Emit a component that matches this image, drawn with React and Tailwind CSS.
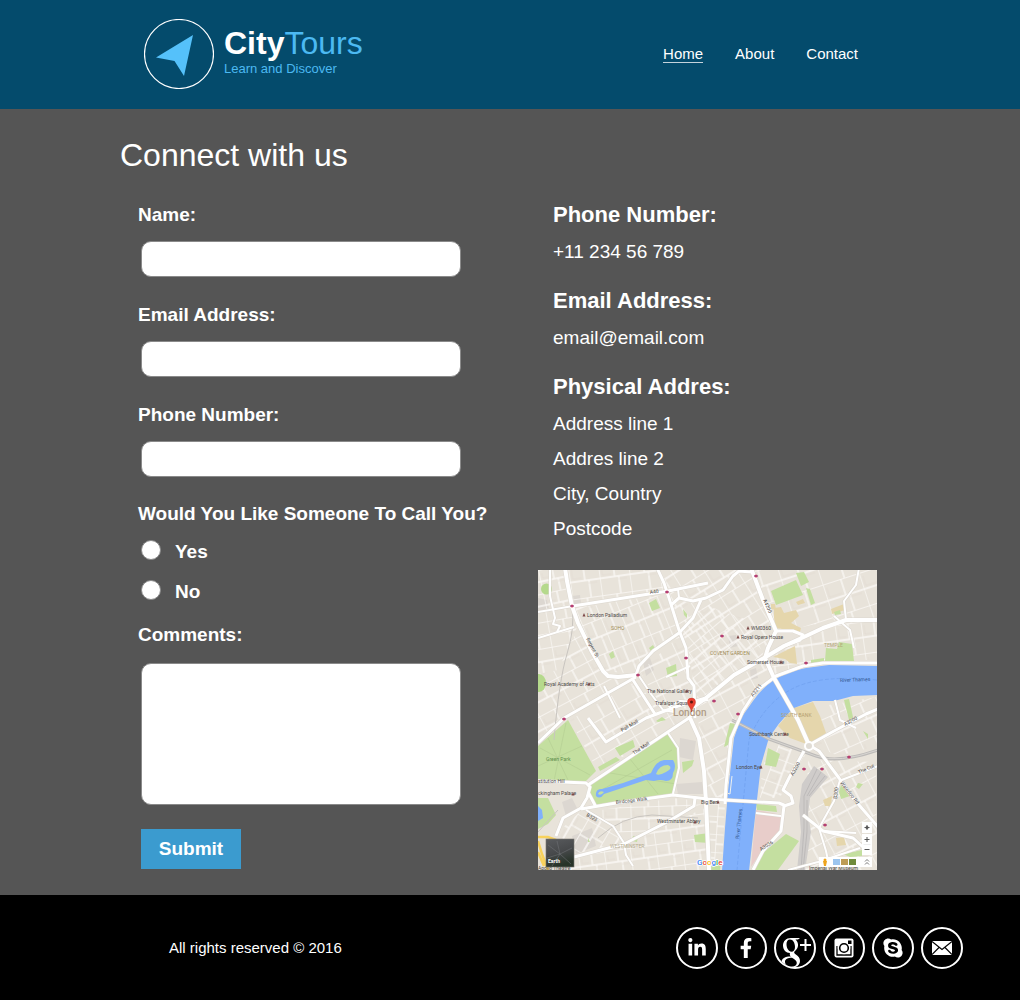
import React from "react";
import { FaFacebookF, FaLinkedinIn, FaSkype } from "react-icons/fa";

const LABEL = "text-[19px] leading-6 font-bold";
const BOX =
  "ml-[3px] block w-full max-w-[320px] rounded-[10px] border border-[#8a8a8a] bg-white px-3 text-base text-black";

function Logo() {
  return (
    <a href="#home" className="flex items-center gap-2.5">
      <svg viewBox="0 0 70 70" className="size-[70px]" aria-hidden="true">
        <circle cx="35" cy="35" r="34.5" fill="none" stroke="#fff" strokeWidth="1.2" />
        <path d="M49 16 L12 38.5 L30.5 42 L40 57 Z" fill="#55c1fa" />
      </svg>
      <span className="flex flex-col gap-0.5 pb-1">
        <span className="text-[32px] leading-8 text-[#4cb9f2]">
          <b className="text-white">City</b>Tours
        </span>
        <span className="text-[13px] leading-4 text-[#4cb9f2]">Learn and Discover</span>
      </span>
    </a>
  );
}

function Field({ id, label, type }) {
  return (
    <div>
      <label htmlFor={id} className={`${LABEL} block`}>{label}</label>
      <input id={id} type={type} className={`${BOX} mt-3.5 h-9`} />
    </div>
  );
}

function Choice({ id, label }) {
  return (
    <div className="ml-[3px] flex h-10 items-center gap-3.5">
      <input
        id={id}
        name="call"
        type="radio"
        className="size-5 appearance-none rounded-full border border-[#8a8a8a] bg-white checked:border-[6px] checked:border-[#3b9bcf]"
      />
      <label htmlFor={id} className={`${LABEL} pt-1`}>{label}</label>
    </div>
  );
}

/* Fine street grids: outline of the district, street angle, block width and height. */
const DISTRICTS = [
  ["0,0 30,0 34,36 0,42", 78, 14, 12],
  ["0,42 34,37 40,55 20,100 0,104", 80, 16, 13],
  ["29,0 119,0 130,21 35,35", 82, 15, 17],
  ["36,38 130,24 141,62 100,96 97,104 66,101 42,54", 68, 10, 17],
  ["0,104 20,100 40,58 64,104 95,109 26,147 0,170", 62, 17, 13],
  ["102,102 141,66 148,80 150,110 156,118 155,138 126,140", 65, 15, 15],
  ["119,0 212,0 236,60 228,84 168,126 157,120 150,80", 58, 14, 15],
  ["97,112 125,140 150,148 96,182 58,198 32,150", 60, 20, 16],
  ["143,64 164,34 210,50 226,86 160,130", 50, 12, 13],
  ["216,0 339,0 339,48 308,48 240,62", 72, 19, 17],
  ["232,88 266,68 308,52 339,52 339,90 285,90 236,104", 82, 13, 16],
  ["158,132 228,90 234,108 214,122 196,152 190,228 169,228", 62, 17, 15],
  ["40,244 135,228 168,232 131,249 86,272 75,255", 88, 14, 12],
  ["20,262 43,241 74,257 86,273 36,284", 30, 16, 12],
  ["38,288 86,276 131,254 167,238 171,300 30,300", 82, 13, 12],
  ["171,234 187,234 184,300 172,300", 4, 9, 14],
  ["260,140 339,127 339,176 300,186 274,174", 66, 16, 18],
  ["224,200 233,170 268,184 250,210 242,228 222,228", 20, 12, 13],
  ["270,190 338,192 339,300 265,300", 62, 16, 17],
];

const PARKS = [
  "233,21 258,10 265,25 238,35",
  "258,3 266,2 271,12 263,16",
  "268,18 272,19 277,33 273,35",
  "287,91 288,78 299,79 301,72 314,74 316,91",
  "273,90 286,88 286,92 273,93",
  "111,33 118,29 122,38 114,41",
  "71,84 75,81 77,87 73,89",
  "111,78 115,75 117,79 113,81",
  "128,98 138,94 139,106 130,107",
  "145,39 149,44 149,48 146,45",
  "296,42 302,40 303,44 297,45",
  "30,150 58,201 48,211 0,211 0,176",
  "130,163 140,180 141,200 136,224 57,236 50,220 54,213 95,187",
  "0,228 10,228 18,245 10,254 0,259",
  "60,197 78,187 82,190 62,201",
  "77,178 95,170 97,177 82,186",
  "118,151 124,147 128,150 120,152",
  "144,192 156,190 154,196 145,203",
  "156,265 171,263 171,273 157,272",
  "95,266 100,267 99,272 94,271",
  "50,268 52,272 50,272",
  "192,153 197,154 190,175 186,177",
  "230,178 242,184 238,197 227,195",
  "218,234 238,236 239,242 219,240",
  "248,264 261,271 240,300 217,300 226,282",
  "303,215 312,226 303,229 301,222",
  "320,213 325,214 321,219 318,217",
  "306,130 311,129 315,147 311,150",
  "325,161 330,164 330,169",
  "171,292 183,290 182,300 171,300",
  "305,284 324,280 324,286 312,287",
];

const SANDS = [
  "236,38 243,37 246,43 258,40 261,46 253,53 263,58 262,62 238,58 236,48",
  "235,87 257,76 259,94 252,93 247,89",
  "293,39 306,34 307,40 294,44",
  "258,32 265,29 267,33 260,35",
  "246,149 256,138 275,132 282,146 288,163 271,175 252,168 240,156",
  "285,230 294,226 293,236 287,236",
  "298,268 306,267 308,275 299,276",
  "233,34 237,34 238,40 233,39",
];

const GRAYS = [
  "34,26 42,25 43,33 35,35",
  "105,92 112,88 116,100 108,106",
  "142,168 158,171 155,190 141,187",
  "212,100 218,98 220,108 213,110",
  "190,66 198,65 200,76 192,78",
  "34,266 54,258 58,276 38,284",
  "24,232 34,228 40,240 28,246",
  "138,214 164,212 166,224 140,224",
  "0,28 9,30 11,38 0,42",
];

const ROADS = [
  [4, "27,-2 29,11 34,36 40,53 53,80 65,101 70,106 80,107 98,105"],
  [3, "35,36 130,21 170,13"],
  [2, "0,42 35,36"],
  [2, "0,68 36,57"],
  [3, "119,-2 126,13 131,28 141,60 148,78 150,108 156,116 157,148"],
  [3, "98,105 101,96 115,81 141,63 155,48 163,30"],
  [3, "133,35 141,28 155,31 168,28 185,20 195,6 201,1 213,2"],
  [2, "131,21 140,19 141,28"],
  [3, "0,173 26,148 98,107"],
  [3, "95,110 115,141 117,144"],
  [2, "101,106 113,124 125,140 136,142"],
  [3, "50,148 68,172 108,148 140,136 168,128"],
  [2, "136,142 131,136 142,131 157,132 170,130"],
  [4, "213,-2 225,30 238,61 230,78 227,88 236,108 260,150 271,175"],
  [4, "157,136 168,128 196,105 226,88 246,76 268,66 285,58 308,50 340,50"],
  [3, "238,61 255,61 265,65 262,70 246,76"],
  [2, "321,-2 318,15 306,31 308,50"],
  [3, "340,93 285,93 265,96 238,106 218,121 205,141 193,168 188,215 187,234"],
  [3, "50,215 95,185 151,148 157,140"],
  [3, "0,211 48,213 52,217 49,228 43,238"],
  [3, "50,222 58,237"],
  [3, "43,239 78,233 135,225 170,229 241,233 248,236"],
  [3, "43,238 25,248 18,266"],
  [2, "48,240 75,256 86,273 88,285 95,296"],
  [3, "36,287 86,274 131,251 156,236 157,228"],
  [4, "152,148 161,168 166,201 168,232 171,300"],
  [2, "130,163 140,178 141,198 135,224"],
  [3, "271,175 296,161 328,144 340,139"],
  [3, "271,175 281,181 301,208 315,228 340,257"],
  [3, "266,181 251,208 245,220 253,226 255,233 246,236 243,261 225,281 215,300"],
  [2, "301,211 340,196"],
  [2, "302,210 296,231 281,258 288,281 292,300"],
  [3, "265,245 285,261 315,268 326,278"],
  [2, "285,261 318,263"],
  [2, "218,243 243,246"],
  [2, "250,300 280,292 322,278"],
  [2, "296,46 312,60 316,78"],
  [2, "12,0 12,26 17,48 15,54 22,56 19,62"],
  [2, "128,107 152,96"],
  [2, "66,116 82,148"],
  [2, "297,130 302,150 318,158"],
];

const LABELS = [
  [49, 47, "London Palladium"],
  [6, 116, "Royal Academy of Arts"],
  [109, 123, "The National Gallery"],
  [117, 135, "Trafalgar Square"],
  [213, 60, "WM0360"],
  [203, 69, "Royal Opera House"],
  [209, 94, "Somerset House"],
  [211, 166, "Southbank Centre"],
  [198, 199, "London Eye"],
  [0, 225, "ckingham Palace"],
  [119, 253, "Westminster Abbey"],
  [163, 234, "Big Ben"],
  [0, 213, "stitution Hill"],
];

const TILTED = [
  [48, 69, 62, "Regent St"],
  [112, 24, -8, "A40"],
  [225, 30, 66, "A4200"],
  [215, 127, -52, "A3211"],
  [84, 162, -30, "Pall Mall"],
  [96, 185, -34, "The Mall"],
  [78, 234, -7, "Birdcage Walk"],
  [48, 246, 30, "B323"],
  [255, 206, -60, "A3200"],
  [307, 156, -28, "A3200"],
  [321, 204, -24, "The Cut"],
  [302, 213, 52, "Waterloo Rd"],
  [299, 229, -84, "B300"],
  [223, 281, -32, "A3036"],
];

const STATIONS = [
  [34, 36], [129, 22], [148, 88], [100, 105], [26, 149], [218, 6], [184, 66],
  [268, 93], [176, 131], [200, 144], [266, 199], [284, 199], [311, 187], [287, 255],
];

const DOTS = [
  [46, 45], [51, 114], [149, 121], [210, 58], [200, 67], [243, 92], [247, 164],
  [223, 197], [35, 224], [157, 252], [180, 232],
];

const THAMES =
  "M203 148 L215 131 Q224 118 236 110 Q250 101 268 98 L291 95 L340 96 V125 L315 126 L296 131 L275 131 L256 138 Q238 154 230 171 L223 195 L220 221 L215 265 L211 301 H184 L187 258 L190 221 L196 168 Z";

function MapView() {
  return (
    <svg viewBox="0 0 339 300" className="block w-full" role="img" aria-label="Map of central London" fontFamily="Roboto, 'Liberation Sans', sans-serif">
      <defs>
        {DISTRICTS.map(([, angle, w, h], i) => (
          <pattern key={i} id={`streets${i}`} width={w * 2} height={h * 2} patternUnits="userSpaceOnUse" patternTransform={`rotate(${angle - 90})`}>
            <path d={`M0 0 H${w * 2} M0 ${h} H${w * 2} M0 0 V${h * 2} M${w} 0 V${h} M${w + 4} ${h} V${h * 2}`} stroke="#fbf9f6" strokeWidth="1.3" fill="none" />
            <path d={`M3 4 V${h - 3} H${w - 3} M${w + 3} ${h + 3} H${w * 2 - 3}`} stroke="#dfd9cf" strokeWidth="0.5" fill="none" />
          </pattern>
        ))}
        <linearGradient id="earth" x1="0" y1="0" x2="0.3" y2="1">
          <stop offset="0" stopColor="#595b5e" />
          <stop offset="0.55" stopColor="#47494b" />
          <stop offset="1" stopColor="#273328" />
        </linearGradient>
      </defs>
      <rect width="339" height="300" fill="#e8e3da" />
      {GRAYS.map((p) => <polygon key={p} points={p} fill="#dcd7d1" />)}
      {DISTRICTS.map(([p], i) => <polygon key={p} points={p} fill={`url(#streets${i})`} />)}
      {SANDS.map((p) => <polygon key={p} points={p} fill="#e5d6ac" />)}
      <polygon points="218,240 245,245 243,263 224,281 213,297 216,262" fill="#e8cdca" />
      {PARKS.map((p) => <polygon key={p} points={p} fill="#c4dfa0" />)}
      <circle cx="8.500" cy="19" r="5.500" fill="#b5d98c" />
      <ellipse cx="1" cy="113" rx="7" ry="9" fill="#b5d98c" />
      <path d="M2 178 L52 205 M0 196 L44 176 M10 168 L30 210 M28 153 L16 211 M60 222 L134 180 M92 189 L120 224 M72 203 L138 214" stroke="#b3cd92" strokeWidth="0.6" fill="none" />
      <path d="M34 38 Q37 58 29 84 T16 170 M60 268 Q84 246 114 245 L160 248 M0 262 L20 240" stroke="#c9c5c0" fill="none" />

      <path d={THAMES} fill="#80b0fb" />
      <path d="M339 110 Q280 104 252 120 T211 170 L199 300" fill="none" stroke="#6f9fee" strokeWidth="0.7" strokeDasharray="4 2" />
      <path d="M58 226 Q57 219 64 219 L85 213 L113 203 Q118 191 126 190 L135 190 Q139 196 135 203 Q135 211 128 211 Q122 209 116 211 L108 210 L66 224 Q62 230 58 226Z" fill="#80b0fb" />
      <path d="M118 204 Q121 195 130 195 Q136 198 128 202 Q121 206 118 204Z M60 224 Q61 220 66 222 Q63 226 60 224Z" fill="#c4dfa0" />
      <path d="M0 236 L4 240 L5 248 L0 251Z" fill="#80b0fb" />
      <path d="M194 206 L192 224 L189 223" stroke="#eef0ee" fill="none" />

      <path d="M194 150 L231 169 L278 186 Q300 194 340 180" fill="none" stroke="#bdbbb9" strokeWidth="3" />
      <path d="M194 150 L231 169 L278 186 Q300 194 340 180" fill="none" stroke="#d8d5d1" strokeWidth="1" />
      <path d="M276 196 L290 207 L272 228 L270 244 L273 262 L267 300 H259 L263 262 L261 236 L264 214Z" fill="#cfccca" />
      <path d="M279 199 L266 226 M283 202 L269 226 M287 206 L271 226 M266 226 L266 258 L263 300 M269 230 L269 262 L265 300" stroke="#b4b2b1" strokeWidth="0.7" fill="none" />

      {ROADS.map(([w, p]) => (
        <polyline key={p} points={p} fill="none" stroke="#dcd7cf" strokeWidth={w + 1} strokeLinejoin="round" />
      ))}
      {ROADS.map(([w, p]) => (
        <polyline key={`${p}-top`} points={p} fill="none" stroke="#fff" strokeWidth={w} strokeLinejoin="round" />
      ))}
      <path d="M0 267 H10 L18 270 M0 271 L4 284 L10 300 M0 282 L6 296" stroke="#f8d25c" strokeWidth="2.500" fill="none" />
      <circle cx="271" cy="176" r="4" fill="#e0dcd5" stroke="#fff" strokeWidth="2" />

      <g fill="#4d4a48" fontSize="5">
        {LABELS.map(([x, y, t]) => <text key={`${t}${x}`} x={x} y={y}>{t}</text>)}
        {TILTED.map(([x, y, a, t]) => (
          <text key={`${t}${x}`} x={x} y={y} transform={`rotate(${a} ${x} ${y})`}>{t}</text>
        ))}
        <text x="302" y="112" fill="#32578f" transform="rotate(-2 302 112)">River Thames</text>
        <text x="201" y="269" fill="#32578f" transform="rotate(-84 201 269)">River Thames</text>
        <text x="8" y="191" fill="#5f8f4c">Green Park</text>
        <text x="271" y="300">Imperial War Museum</text>
        <text x="0" y="300">Apollo Theatre</text>
      </g>
      <g fill="#a08c55" fontSize="5">
        <text x="73" y="60">SOHO</text>
        <text x="172" y="85">COVENT GARDEN</text>
        <text x="286" y="77" fill="#b3a878">TEMPLE</text>
        <text x="243" y="147" fill="#b5a070">SOUTH BANK</text>
        <text x="72" y="278" fill="#b5ab90">WESTMINSTER</text>
      </g>
      {STATIONS.map(([x, y]) => (
        <g key={`${x}-${y}`}>
          <circle cx={x} cy={y} r="1.500" fill="#e0415c" />
          <rect x={x - 2} y={y - 0.5} width="4" height="1" fill="#8c3f83" />
        </g>
      ))}
      {DOTS.map(([x, y]) => <path key={`${x}-${y}`} d={`M${x - 1.5} ${y + 1.5} L${x} ${y - 2} L${x + 1.5} ${y + 1.5}Z`} fill="#7d4a49" />)}

      <text x="135" y="146" fontSize="10" fontWeight="500" fill="#b09c87">London</text>
      <path d="M153.500 142 C153 137 149.500 136 149.500 132 A4 4 0 0 1 157.500 132 C157.500 136 154 137 153.500 142Z" fill="#ea4031" stroke="#b93a2e" strokeWidth="0.5" />
      <circle cx="153.500" cy="132" r="1.500" fill="#5c1610" />

      <rect x="8" y="269" width="28" height="28" fill="url(#earth)" stroke="#77756f" strokeWidth="0.6" />
      <path d="M10 275 L22 284 L34 278 M14 296 L22 284 L19 271 M9 288 L22 284 L33 294" stroke="#74767a" strokeWidth="0.5" fill="none" />
      <text x="10" y="293" fontSize="5" fontWeight="700" fill="#fff">Earth</text>

      <text x="159" y="295" fontSize="8" fontWeight="500" stroke="#fff" strokeWidth="1.500" paintOrder="stroke" fill="#4285f4">
        G<tspan fill="#ea4335">o</tspan><tspan fill="#fbbc05">o</tspan><tspan>g</tspan><tspan fill="#34a853">l</tspan><tspan fill="#ea4335">e</tspan>
      </text>

      <g fill="#fff">
        <rect x="324" y="252" width="10" height="11" />
        <rect x="324" y="264" width="10" height="21" />
        <rect x="281" y="287" width="53" height="10" />
      </g>
      <circle cx="329" cy="257.500" r="1.500" fill="#555" />
      <path d="M326.500 257.500 H331.500 M329 255 V260 M326.500 269.500 H331.500 M329 267 V272 M326.500 279.500 H331.500" stroke="#555" strokeWidth="1" />
      <path d="M325.500 274.500 H332.500" stroke="#ddd" strokeWidth="0.5" />
      <path d="M285 291 H289 L288 296 H286Z" fill="#efa51f" />
      <circle cx="287" cy="290" r="1.500" fill="#efa51f" />
      <rect x="295" y="289" width="7" height="6" fill="#9cc5ee" />
      <rect x="303" y="289" width="7" height="6" fill="#bd9c55" />
      <rect x="311" y="289" width="7" height="6" fill="#6f8b3c" />
      <path d="M327 291.500 L329 289.500 L331 291.500 M327 294.500 L329 292.500 L331 294.500" stroke="#555" strokeWidth="0.8" fill="none" />
    </svg>
  );
}

function Social({ label, children }) {
  return (
    <a href={`#${label}`} aria-label={label} className="flex size-[42px] items-center justify-center overflow-hidden rounded-full border-2 border-white text-white">
      {children}
    </a>
  );
}

function GooglePlusMark() {
  return (
    <svg viewBox="0 0 38 38" className="size-[38px] shrink-0" fill="#fff" fillRule="evenodd" aria-hidden="true">
      <path d="M24 9 H15 C10 9 7 12.500 7 16.500 C7 21 10 24 14 24 C13.500 25.500 13.800 26.500 14.800 27.500 C9 27.500 5.500 29.500 5.500 33 C5.500 36.500 9.500 39 14.500 39 C20.500 39 24 36 24 32 C24 29 22.500 27.300 19.500 25.200 C17.500 23.800 17.800 22.800 19.500 21.500 C22.800 19 23 13.500 19.500 10.500 H22Z M14 10.500 C17 10.500 19 14 19 18 C19 21 17.500 22.700 15.500 22.700 C12.500 22.700 10.500 19 10.500 15 C10.500 12.300 11.800 10.500 14 10.500Z M16 28.800 C19 30.800 20.800 31.800 20.800 34 C20.800 36.300 18.500 37.600 15.500 37.600 C11.500 37.600 9 35.600 9 32.800 C9 30 12 28.800 16 28.800Z" />
      <path d="M28.500 10 H30.500 V15 H35 V17 H30.500 V22 H28.500 V17 H24 V15 H28.500Z" />
    </svg>
  );
}

function CameraMark() {
  return (
    <svg viewBox="0 0 20 20" className="size-5" aria-hidden="true">
      <rect x="0.500" y="0.500" width="19" height="19" rx="2" fill="#fff" />
      <path d="M3 8 V17 H17 V8" fill="none" stroke="#000" strokeWidth="1.300" />
      <circle cx="10" cy="10" r="6.300" fill="#fff" />
      <circle cx="10" cy="10" r="4.300" fill="#fff" stroke="#000" strokeWidth="1.600" />
      <rect x="14" y="2.500" width="3.500" height="3.500" fill="#000" />
    </svg>
  );
}

function MailMark() {
  return (
    <svg viewBox="0 0 20 14" className="h-3.5 w-5" aria-hidden="true">
      <rect width="20" height="14" fill="#fff" />
      <path d="M0 0.500 L10 8.500 L20 0.500 M0 13.500 L7 6.500 M20 13.500 L13 6.500" fill="none" stroke="#000" strokeWidth="1.200" />
    </svg>
  );
}

export default function App() {
  return (
    <div className="flex min-h-screen flex-col bg-[#555] font-['Liberation_Sans',Arial,sans-serif] text-white">
      <header className="bg-[#044b6c]">
        <div className="mx-auto flex h-[109px] max-w-7xl items-center justify-between pr-[162px] pb-0.5 pl-36">
          <Logo />
          <nav className="flex gap-8 text-[15px] leading-[17px]">
            <a href="#home" aria-current="page" className="border-b border-[#c5d3dc]">Home</a>
            <a href="#about">About</a>
            <a href="#contact">Contact</a>
          </nav>
        </div>
      </header>

      <main className="mx-auto w-full max-w-7xl grow pt-[26px] pr-[143px] pb-[25px] pl-[120px]">
        <h1 className="text-[32px] leading-10">Connect with us</h1>
        <div className="mt-[26px] grid grid-cols-[418fr_339fr]">
          <form className="pt-0.5 pl-[18px]" onSubmit={(e) => e.preventDefault()}>
            <div className="flex flex-col gap-[26px]">
              <Field id="name" label="Name:" type="text" />
              <Field id="email" label="Email Address:" type="email" />
              <Field id="phone" label="Phone Number:" type="tel" />
            </div>
            <fieldset className="mt-[25px]">
              <legend className={`${LABEL} mb-1`}>Would You Like Someone To Call You?</legend>
              <Choice id="yes" label="Yes" />
              <Choice id="no" label="No" />
            </fieldset>
            <label htmlFor="comments" className={`${LABEL} mt-[13px] block`}>Comments:</label>
            <textarea id="comments" className={`${BOX} mt-4 h-[142px] resize-none py-2`} />
            <button type="submit" className={`${LABEL} mt-6 ml-[3px] block h-10 w-[100px] bg-[#3b9bcf]`}>Submit</button>
          </form>

          <section>
            <div className="flex flex-col gap-[18px] pl-[15px] text-[19px] leading-[35px]">
              <div>
                <h2 className="mb-[5px] text-[22px] leading-7 font-bold">Phone Number:</h2>
                <p>+11 234 56 789</p>
              </div>
              <div>
                <h2 className="mb-[5px] text-[22px] leading-7 font-bold">Email Address:</h2>
                <p>email@email.com</p>
              </div>
              <div>
                <h2 className="mb-[5px] text-[22px] leading-7 font-bold">Physical Addres:</h2>
                <address className="not-italic">
                  <p>Address line 1</p>
                  <p>Addres line 2</p>
                  <p>City, Country</p>
                  <p>Postcode</p>
                </address>
              </div>
            </div>
            <div className="mt-6">
              <MapView />
            </div>
          </section>
        </div>
      </main>

      <footer className="bg-black">
        <div className="mx-auto flex h-[105px] max-w-7xl items-center justify-between pr-[57px] pl-[169px]">
          <p className="text-[15px] leading-[18px]">All rights reserved © 2016</p>
          <div className="flex gap-[7px]">
            <Social label="LinkedIn"><FaLinkedinIn className="size-5" /></Social>
            <Social label="Facebook"><FaFacebookF className="size-5" /></Social>
            <Social label="GooglePlus"><GooglePlusMark /></Social>
            <Social label="Instagram"><CameraMark /></Social>
            <Social label="Skype"><FaSkype className="size-[22px]" /></Social>
            <Social label="Email"><MailMark /></Social>
          </div>
        </div>
      </footer>
    </div>
  );
}
